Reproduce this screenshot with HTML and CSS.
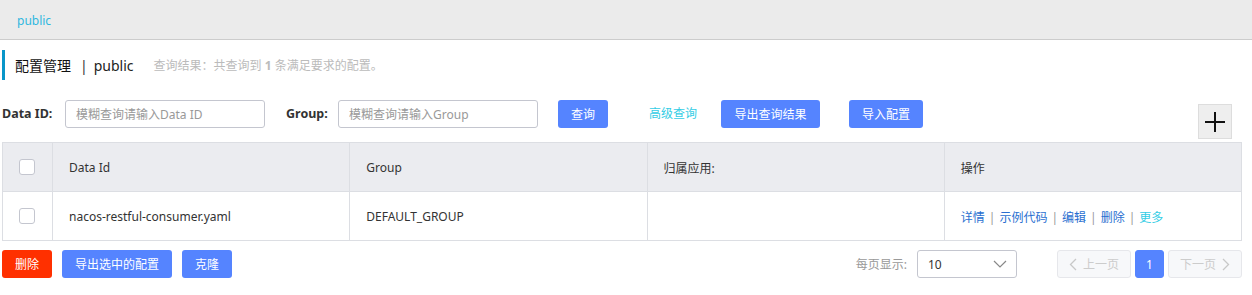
FILE: index.html
```html
<!DOCTYPE html>
<html lang="en">
  <head>
    <title>配置管理</title>
    <link rel="stylesheet" href="styles.css">
  </head>
  <body>
    <div class="topbar"><span class="ns">public</span></div>

    <div class="main">
      <div class="title">
        <span class="title-name">配置管理</span>
        <span class="title-sep">|</span>
        <span class="title-ns">public</span>
        <span class="title-info">查询结果：共查询到 <b>1</b> 条满足要求的配置。</span>
      </div>

      <div class="search">
        <label class="search-label id-label">Data ID:</label>
        <input class="search-input" placeholder="模糊查询请输入Data ID">
        <label class="search-label group-label">Group:</label>
        <input class="search-input" placeholder="模糊查询请输入Group">
        <button class="btn btn-query">查询</button>
        <a class="adv-link">高级查询</a>
        <button class="btn btn-export">导出查询结果</button>
        <button class="btn btn-import">导入配置</button>
        <button class="plus">
          <svg width="20" height="20" viewBox="0 0 20 20"><path d="M10 0v20M0 10h20" stroke="#111" stroke-width="2"/></svg>
        </button>
      </div>

      <table class="grid">
        <thead>
          <tr>
            <th class="col-check"><span class="checkbox"></span></th>
            <th class="col">Data Id</th>
            <th class="col">Group</th>
            <th class="col">归属应用:</th>
            <th class="col">操作</th>
          </tr>
        </thead>
        <tbody>
          <tr>
            <td class="col-check"><span class="checkbox"></span></td>
            <td>nacos-restful-consumer.yaml</td>
            <td>DEFAULT_GROUP</td>
            <td></td>
            <td class="actions">
              <a>详情</a><span class="sep">|</span><a>示例代码</a><span class="sep">|</span><a>编辑</a><span class="sep">|</span><a>删除</a><span class="sep">|</span><a class="more">更多</a>
            </td>
          </tr>
        </tbody>
      </table>

      <div class="footer">
        <button class="btn btn-delete">删除</button>
        <button class="btn btn-export-sel">导出选中的配置</button>
        <button class="btn btn-clone">克隆</button>

        <span class="page-size-label">每页显示:</span>
        <div class="select">
          <span>10</span>
          <svg width="14" height="8" viewBox="0 0 14 8"><path d="M1 1l6 6 6-6" fill="none" stroke="#888" stroke-width="1.2"/></svg>
        </div>

        <div class="pager">
          <span class="page-btn page-prev"><svg width="8" height="13" viewBox="0 0 8 13"><path d="M7 1L1.5 6.5 7 12" fill="none" stroke="#c8c8c8" stroke-width="1.3"/></svg>上一页</span>
          <span class="page-btn page-cur">1</span>
          <span class="page-btn page-next">下一页<svg width="8" height="13" viewBox="0 0 8 13"><path d="M1 1l5.5 5.5L1 12" fill="none" stroke="#c8c8c8" stroke-width="1.3"/></svg></span>
        </div>
      </div>
    </div>
  </body>
</html>
```

FILE: styles.css
```css
body {
  margin: 0;
  font-family: "Noto Sans", "Noto Sans CJK SC", sans-serif;
  font-size: 12px;
  color: #333;
  background: #fff;
}

.topbar {
  height: 40px;
  background-color: #ebebeb;
  border-bottom: 1px solid #ccc;
  box-sizing: border-box;
  display: flex;
  align-items: center;
  padding: 2px 0 0 17px;
}

.ns {
  color: #2fb7df;
  font-size: 12px;
}

.main {
  padding: 0 10px 0 2px;
}

.title {
  margin-top: 10px;
  height: 30px;
  border-left: 3px solid #0996c9;
  display: flex;
  align-items: center;
  padding-left: 10px;
  font-size: 14px;
  color: #111;
}

.title-sep {
  margin: 0 6px 0 9px;
  color: #333;
}

.title-ns {
  color: #222;
}

.title-info {
  font-size: 12px;
  color: #bbb;
  margin-left: 20px;
}

.search {
  display: flex;
  margin-top: 20px;
  height: 39px;
  align-items: flex-start;
  margin-bottom: 3px;
}

.search-label {
  font-weight: bold;
  font-size: 12.5px;
  color: #333;
  line-height: 28px;
  margin-right: 12px;
  white-space: nowrap;
}

.id-label {
  width: 51px;
}

.group-label {
  margin-left: 21px;
  width: 40px;
}

.search-input {
  width: 200px;
  height: 28px;
  box-sizing: border-box;
  border: 1px solid #c4c6cf;
  border-radius: 3px;
  padding: 0 10px;
  font-family: inherit;
  font-size: 12px;
  color: #333;
}

.search-input::placeholder {
  color: #999;
}

.btn {
  height: 28px;
  border: none;
  border-radius: 3px;
  background-color: #5584ff;
  color: #fff;
  font-family: inherit;
  font-size: 12px;
  padding: 0;
  cursor: pointer;
}

.btn-query {
  margin-left: 20px;
  width: 50px;
}

.adv-link {
  color: #33cde5;
  line-height: 28px;
  margin-left: 41px;
  margin-right: 24px;
}

.btn-export {
  width: 99px;
}

.btn-import {
  margin-left: 29px;
  width: 74px;
}

.plus {
  margin-left: auto;
  margin-right: 10px;
  margin-top: 4px;
  width: 34px;
  height: 35px;
  background-color: #eee;
  border: 1px solid #ddd;
  padding: 0;
  display: flex;
  align-items: center;
  justify-content: center;
}

.grid {
  width: 100%;
  border-collapse: collapse;
  border: 1px solid #dcdee3;
  table-layout: fixed;
}

.grid th {
  background-color: #ebecf0;
  font-weight: normal;
  text-align: left;
  height: 47px;
  border: 1px solid #dcdee3;
  padding: 1px 16px 0;
  color: #333;
}

.grid td {
  height: 47px;
  border: 1px solid #dcdee3;
  padding: 1px 16px 0;
  color: #333;
}

.grid .col-check {
  width: 50px;
  padding: 0 0 0 16px;
  box-sizing: border-box;
}

.checkbox {
  display: block;
  width: 14px;
  height: 14px;
  border: 1px solid #c4c6cf;
  border-radius: 3px;
  background: #fff;
}

.actions a {
  color: #2a6fd0;
}

.actions .more {
  color: #33cde5;
}

.sep {
  color: #999;
  margin: 0 4px;
}

.footer {
  display: flex;
  align-items: center;
  margin-top: 9px;
}

.btn-delete {
  background-color: #ff3000;
  width: 50px;
}

.btn-export-sel {
  margin-left: 10px;
  width: 110px;
}

.btn-clone {
  margin-left: 10px;
  width: 50px;
}

.page-size-label {
  margin-left: auto;
  color: #999;
}

.select {
  margin-left: 10px;
  width: 100px;
  height: 28px;
  box-sizing: border-box;
  border: 1px solid #c4c6cf;
  border-radius: 3px;
  display: flex;
  align-items: center;
  justify-content: space-between;
  padding: 0 9px 0 10px;
  color: #333;
}

.pager {
  display: flex;
  margin-left: 40px;
}

.page-btn {
  height: 28px;
  box-sizing: border-box;
  border: 1px solid #e6e7eb;
  border-radius: 3px;
  background-color: #f7f8fa;
  color: #ccc;
  display: flex;
  align-items: center;
  justify-content: center;
  gap: 6px;
}

.page-prev,
.page-next {
  width: 74px;
}

.page-cur {
  width: 29px;
  margin: 0 4px;
  background-color: #5584ff;
  border-color: #5584ff;
  color: #fff;
}
```
